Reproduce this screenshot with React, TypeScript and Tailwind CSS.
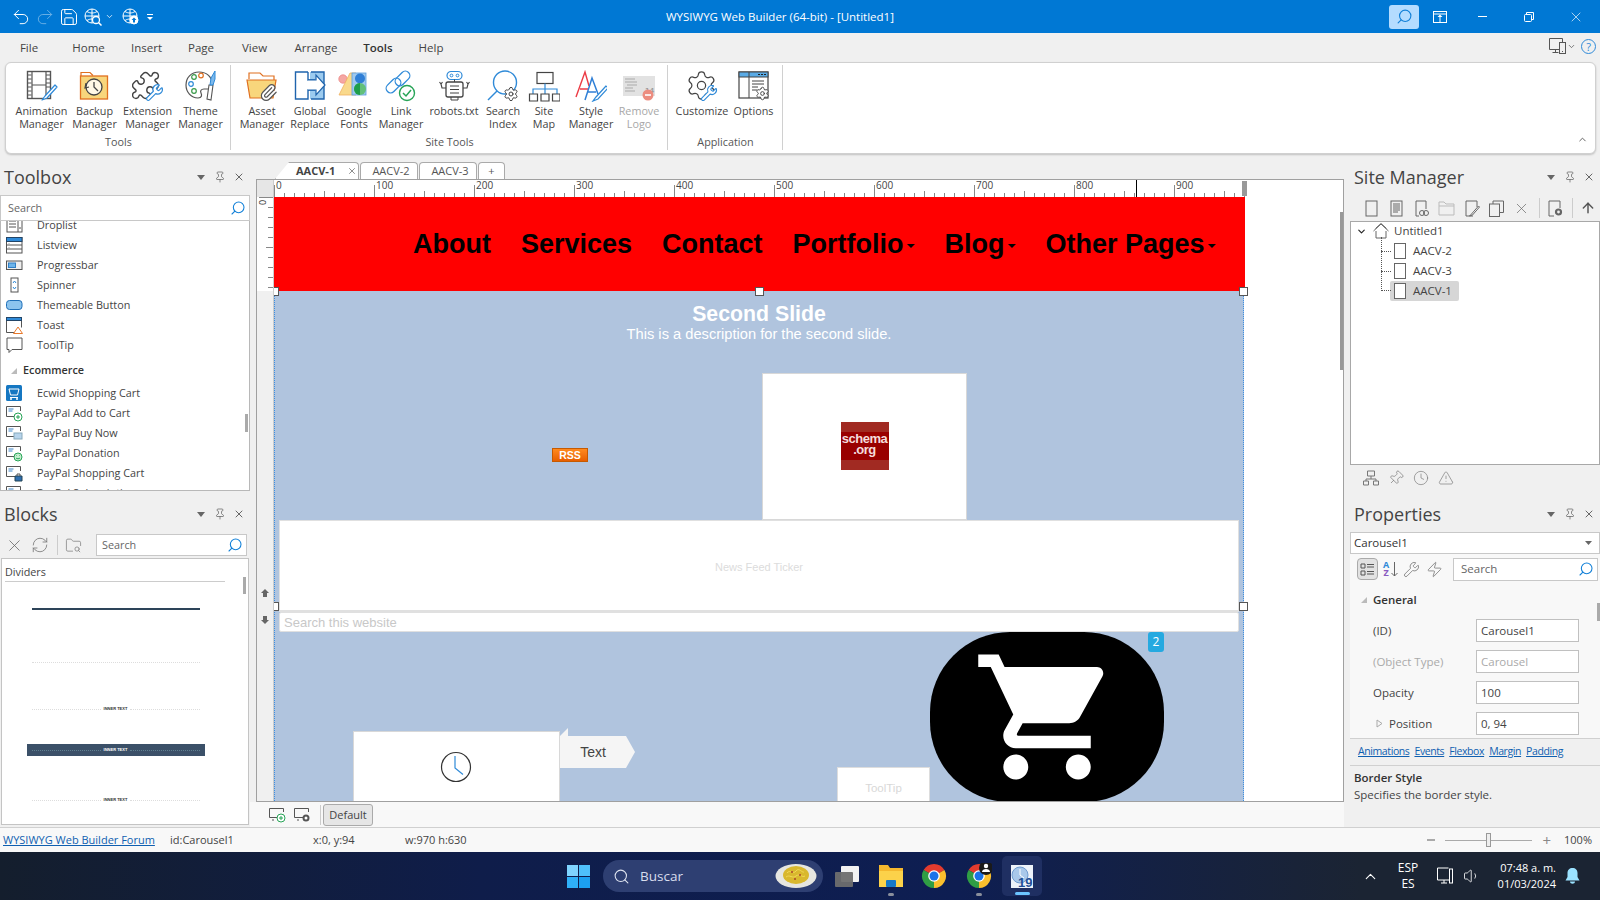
import type { ReactNode } from "react";
import {
  ArrowUp,
  ChevronDown,
  ChevronUp,
  Clock,
  FolderSearch,
  Paperclip,
  Pin,
  Puzzle,
  Redo2,
  RefreshCw,
  Save,
  Search,
  Settings,
  TriangleAlert,
  Undo2,
  Volume1,
  Wrench,
  X,
  Zap,
} from "lucide-react";

const uiFont = "font-['Open_Sans','Liberation_Sans',sans-serif]";
const webFont = "font-['Liberation_Sans',Arial,sans-serif]";

// ---- ribbon icons, all on a 32 box
const Icon = ({ children, size = 32 }: { children: ReactNode; size?: number }) => (
  <svg width={size} height={size} viewBox="0 0 32 32" fill="none">
    {children}
  </svg>
);

const Pencil = ({ d = "M29 15l-10 11-3 4 5-2 10-11z" }: { d?: string }) => (
  <path d={d} fill="#fff" stroke="#2f8ad8" strokeWidth="1.2" strokeLinejoin="round" />
);

const ribbonIcons: Record<string, ReactNode> = {
  animation: (
    <Icon>
      <rect x="1.5" y="1.5" width="23" height="27" fill="#fff" stroke="#555" strokeWidth="1.4" />
      <path d="M6 1.5v27M20 1.5v27M6 15h14" stroke="#555" strokeWidth="1.2" />
      <path d="M1.5 5h4M1.5 9h4M1.5 13h4M1.5 17h4M1.5 21h4M1.5 25h4M20 5h4.5M20 9h4.5M20 13h4.5M20 17h4.5" stroke="#555" />
      <Pencil />
    </Icon>
  ),
  backup: (
    <Icon>
      <path d="M2 7V2.5h9l3 3" stroke="#e07020" strokeWidth="1.2" />
      <rect x="1.5" y="6" width="27" height="23" fill="#f8d67c" stroke="#e07020" strokeWidth="1.3" />
      <circle cx="15" cy="17" r="8" fill="#fff8e6" stroke="#444" strokeWidth="1.3" />
      <path d="M15 12v5l4 4" stroke="#444" strokeWidth="1.3" />
      <path d="M7 13l-1 5 4-1" stroke="#444" strokeWidth="1.2" />
    </Icon>
  ),
  extension: (
    <Icon>
      <Puzzle x={-2} y={0} size={31} strokeWidth={1.1} color="#444" />
      <Wrench x={13} y={13} size={19} strokeWidth={1.5} color="#2f8ad8" fill="#fff" />
    </Icon>
  ),
  theme: (
    <Icon>
      <path d="M14 2C6 2 1 8 1 15s5 13 12 13c4 0 4-3 3-5s0-4 3-4h4c3 0 4-2 4-5C27 7 22 2 14 2z" fill="#fff" stroke="#555" strokeWidth="1.2" />
      <circle cx="9" cy="7" r="2.3" stroke="#3a9a4a" strokeWidth="1.2" />
      <circle cx="16" cy="5.5" r="2.3" stroke="#e07020" strokeWidth="1.2" />
      <circle cx="6" cy="14" r="2.3" stroke="#2f8ad8" strokeWidth="1.2" />
      <circle cx="9" cy="21" r="2.3" stroke="#3a9a4a" strokeWidth="1.2" />
      <path d="M26 30l2-15h-4l-2 14z" fill="#fff" stroke="#555" strokeWidth="1.1" />
      <path d="M25 15l1-7 4-7 0 8-2 6z" fill="#7db9ec" stroke="#2f8ad8" strokeWidth="1" />
    </Icon>
  ),
  asset: (
    <Icon>
      <path d="M3 9V3h11l3 3h11v4" fill="#fff" stroke="#e07020" strokeWidth="1.2" />
      <path d="M1 10h29l-3 18H4z" fill="#f8d67c" stroke="#e07020" strokeWidth="1.2" />
      <Paperclip x={13} y={13} size={19} strokeWidth={1.5} color="#555" fill="#fff" />
    </Icon>
  ),
  replace: (
    <Icon>
      <rect x="16" y="2" width="14" height="27" fill="#9ccbef" />
      <path d="M14 2H1.5v27H14v-9H21" stroke="#1f64ad" strokeWidth="1.4" />
      <path d="M14 2v8h7M17 2h13v27H17" stroke="#1f64ad" strokeWidth="1.4" />
      <path d="M14 10h8V5l9 10-9 10v-5h-8" fill="#fff" stroke="#1f64ad" strokeWidth="1.2" />
    </Icon>
  ),
  fonts: (
    <Icon>
      <circle cx="5" cy="9" r="4.2" fill="#f5a7a3" stroke="#e88" strokeWidth=".8" />
      <path d="M1 25L12 3l6 0v22z" fill="#f9d98c" stroke="#f0b060" strokeWidth=".8" />
      <rect x="14" y="3" width="14" height="22" fill="#9fc9ee" stroke="#5a9ddb" strokeWidth=".8" />
      <circle cx="22" cy="8.5" r="5" fill="#2f7fd6" />
      <circle cx="22" cy="19" r="6" fill="#62c07a" />
      <path d="M22 13a6 6 0 000 12z" fill="#1e9e4a" />
    </Icon>
  ),
  link: (
    <Icon>
      <rect x="0" y="11" width="17" height="9" rx="4.5" stroke="#2f8ad8" strokeWidth="1.3" transform="rotate(-45 8.500 15.500)" />
      <rect x="9" y="4" width="17" height="9" rx="4.5" stroke="#2f8ad8" strokeWidth="1.3" transform="rotate(-45 17.500 8.500)" />
      <circle cx="22" cy="23" r="7.5" fill="#fff" stroke="#27a457" strokeWidth="1.4" />
      <path d="M18 23l3 3 5-6" stroke="#27a457" strokeWidth="1.5" />
    </Icon>
  ),
  robots: (
    <Icon>
      <rect x="9" y="1.5" width="15" height="8" rx="4" stroke="#2f8ad8" strokeWidth="1.2" />
      <circle cx="13.5" cy="5.5" r="1.4" stroke="#2f8ad8" />
      <circle cx="19.5" cy="5.5" r="1.4" stroke="#2f8ad8" />
      <rect x="8" y="12" width="17" height="15" rx="2" fill="#fff" stroke="#444" strokeWidth="1.3" />
      <path d="M12 16h9M12 19.5h9M12 23h9M13 27v3h7v-3M16.5 9.5V12" stroke="#444" />
      <path d="M8 18H4l-1-4M25 18h4l1-4M1.5 12l1.5 2 1.5-2M28.5 12l1.5 2 1.5-2" stroke="#444" strokeWidth="1.1" />
    </Icon>
  ),
  index: (
    <Icon>
      <circle cx="18" cy="12.5" r="11.5" stroke="#2f8ad8" strokeWidth="1.4" />
      <path d="M10 21L1 30" stroke="#2f8ad8" strokeWidth="1.4" />
      <Settings x={16} y={16} size={16} strokeWidth={1.5} color="#444" fill="#fff" />
    </Icon>
  ),
  sitemap: (
    <Icon>
      <rect x="9" y="2.5" width="16" height="11" stroke="#444" strokeWidth="1.2" />
      <path d="M17 13.5V19M5 24v-5h24v5M17 19v5" stroke="#2f8ad8" strokeWidth="1.2" />
      <path d="M1.5 24h8v7h-8zM13 24h8v7h-8zM24.500 24h7.500v7h-7.500z" stroke="#444" strokeWidth="1.2" />
    </Icon>
  ),
  style: (
    <Icon>
      <path d="M1 27L10 2l4 14M5 19h9" stroke="#ec3b45" strokeWidth="1.4" />
      <path d="M10 30l7-22 6 16M13 22h8" stroke="#2f7fd6" strokeWidth="1.5" />
      <path d="M31 16L21 27l-3 4 5-2 10-11z" fill="#fff" stroke="#2f8ad8" strokeWidth="1.2" />
    </Icon>
  ),
  remove: (
    <Icon>
      <rect x="0" y="6" width="32" height="20" fill="#e2e2e2" />
      <path d="M2 9h10M2 12h12M4 15h10M2 18h8M2 21h10" stroke="#aaa" />
      <text x="22" y="23" fontSize="8" fill="#999" fontWeight="700" fontFamily="Liberation Sans">14</text>
      <circle cx="25" cy="25" r="5.500" fill="#ec8d80" />
      <path d="M22 25h6" stroke="#fff" strokeWidth="1.600" />
    </Icon>
  ),
  customize: (
    <Icon>
      <Settings x={-1} y={-1} size={33} strokeWidth={0.9} color="#444" />
      <Wrench x={14} y={14} size={18} strokeWidth={1.5} color="#2f8ad8" fill="#fff" />
    </Icon>
  ),
  options: (
    <Icon>
      <rect x="1" y="2" width="29" height="26" fill="#fff" stroke="#444" strokeWidth="1.2" />
      <rect x="1" y="2" width="29" height="5" fill="#5aabe6" stroke="#444" strokeWidth="1" />
      <path d="M20 4.500h2M23 4.500h2M26 4.500h2" stroke="#222" />
      <path d="M11 2v26M14 11h12M14 14h12M14 17h6M14 20h5" stroke="#444" />
      <Settings x={17} y={16} size={15} strokeWidth={1.5} color="#444" fill="#fff" />
    </Icon>
  ),
};

const ribbonGroups = [
  {
    name: "Tools",
    width: 225,
    pad: "pl-[9px]",
    items: [
      { icon: "animation", w: 53, lines: ["Animation", "Manager"] },
      { icon: "backup", w: 53, lines: ["Backup", "Manager"] },
      { icon: "extension", w: 53, lines: ["Extension", "Manager"] },
      { icon: "theme", w: 53, lines: ["Theme", "Manager"] },
    ],
  },
  {
    name: "Site Tools",
    width: 437,
    pad: "pl-[5px]",
    items: [
      { icon: "asset", w: 52, lines: ["Asset", "Manager"] },
      { icon: "replace", w: 44, lines: ["Global", "Replace"] },
      { icon: "fonts", w: 44, lines: ["Google", "Fonts"] },
      { icon: "link", w: 50, lines: ["Link", "Manager"] },
      { icon: "robots", w: 56, lines: ["robots.txt"] },
      { icon: "index", w: 42, lines: ["Search", "Index"] },
      { icon: "sitemap", w: 40, lines: ["Site", "Map"] },
      { icon: "style", w: 54, lines: ["Style", "Manager"] },
      { icon: "remove", w: 42, lines: ["Remove", "Logo"], disabled: true },
    ],
  },
  {
    name: "Application",
    width: 115,
    pad: "pl-[4px]",
    items: [
      { icon: "customize", w: 60, lines: ["Customize"] },
      { icon: "options", w: 43, lines: ["Options"] },
    ],
  },
];

const menuTabs = [
  { name: "File", w: 58 },
  { name: "Home", w: 61 },
  { name: "Insert", w: 55 },
  { name: "Page", w: 54 },
  { name: "View", w: 53 },
  { name: "Arrange", w: 70 },
  { name: "Tools", w: 54, active: true },
  { name: "Help", w: 52 },
];

const TitleBar = () => (
  <div className="relative flex h-[33px] items-center bg-[#0078d4] text-white">
    <div className="flex items-center pl-[11px]">
      <Undo2 size={20} strokeWidth={1.2} />
      <Redo2 size={20} strokeWidth={1.2} className="ml-[4px] opacity-40" />
      <Save size={20} strokeWidth={1.2} className="ml-[4px]" />
      <svg width="18" height="18" viewBox="0 0 18 18" fill="none" stroke="#fff" className="ml-[5px]">
        <circle cx="8" cy="8" r="7" />
        <path d="M1 8h14M8 1v14M3 3.500c3 2 7 2 10 0M3 12.500c3-2 7-2 10 0" />
        <circle cx="12" cy="12" r="3.500" fill="#0078d4" strokeWidth="1.300" />
        <path d="M14.500 14.500l3 3" strokeWidth="1.500" />
      </svg>
      <ChevronDown size={9} strokeWidth={2} className="ml-[3px]" />
      <svg width="18" height="18" viewBox="0 0 18 18" fill="none" stroke="#fff" className="ml-[8px]">
        <circle cx="8" cy="8" r="7" />
        <path d="M1 8h14M8 1v14M3 3.500c3 2 7 2 10 0M3 12.500c3-2 7-2 10 0" />
        <circle cx="12" cy="12" r="4" fill="#fff" />
        <path d="M12 9.500l-2.500 2.500h5zM11 12h2v2.500h-2z" fill="#0078d4" stroke="none" />
      </svg>
      <svg width="8" height="8" viewBox="0 0 8 8" fill="#fff" className="ml-[6px]">
        <path d="M1 1h6v1H1zM1 4h6L4 7z" />
      </svg>
    </div>
    <div className={`absolute left-[666px] top-[8px] text-[11.500px] leading-[17px] ${uiFont}`}>
      WYSIWYG Web Builder (64-bit) - [Untitled1]
    </div>
    <div className="ml-auto flex items-center">
      <div className="flex h-[24px] w-[30px] items-center justify-center rounded-[3px] bg-[#b4dcff]">
        <Search size={17} strokeWidth={1.6} color="#1280d8" className="-scale-x-100" />
      </div>
      <svg width="14" height="12" viewBox="0 0 14 12" fill="none" stroke="#fff" className="ml-[14px]">
        <rect x=".5" y=".5" width="13" height="11" />
        <path d="M.5 3h13" />
        <path d="M7 3.500L4.500 6h5zM6.500 6h1v5.500h-1z" fill="#fff" stroke="none" />
      </svg>
      <div className="ml-[31px] h-[1px] w-[9px] bg-white" />
      <svg width="10" height="10" viewBox="0 0 10 10" fill="none" stroke="#fff" className="ml-[37px]">
        <rect x=".5" y="2.500" width="7" height="7" rx="1" />
        <path d="M2.500 2.500V.5h7v7H7.500" />
      </svg>
      <X size={16} strokeWidth={1} className="ml-[34px] mr-[16px]" />
    </div>
  </div>
);

const MenuTabs = () => (
  <div className={`flex h-[29px] items-center bg-[#f0f0f0] pt-[1px] text-[11.500px] text-[#444] ${uiFont}`}>
    {menuTabs.map((t) => (
      <div
        key={t.name}
        style={{ width: t.w }}
        className={`relative text-center ${t.active ? "font-semibold text-[#333]" : ""}`}
      >
        {t.name}
        {t.active && <div className="absolute bottom-[-9px] left-[11px] h-[2px] w-[31px] bg-[#0a6abf]" />}
      </div>
    ))}
    <div className="ml-auto flex items-center pb-[4px] pr-[4px]">
      <svg width="17" height="16" viewBox="0 0 17 16" fill="none" stroke="#555">
        <path d="M10 11.500H.5v-11h13V4M3.500 14.500h6M6.500 11.500v3" />
        <rect x="10.500" y="4.500" width="6" height="11" fill="#f0f0f0" />
        <path d="M13 13.500h1" />
      </svg>
      <ChevronDown size={9} strokeWidth={2} color="#555" className="ml-[1px]" />
      <div className="ml-[5px] flex h-[15px] w-[15px] items-center justify-center rounded-full border border-[#2f8ad8] text-[11px] leading-none text-[#2f8ad8]">
        ?
      </div>
    </div>
  </div>
);

const Ribbon = () => (
  <div className="h-[92px] bg-[#f0f0f0] pl-[5px] pr-[4px]">
    <div className={`relative flex h-[92px] rounded-[6px] border border-[#d0d0d0] bg-white shadow-[0_1px_2px_rgba(0,0,0,0.2)] ${uiFont}`}>
      {ribbonGroups.map((g) => (
        <div key={g.name} style={{ width: g.width }} className="relative flex flex-col">
          <div className={`flex ${g.pad}`}>
            {g.items.map((it) => (
              <div key={it.icon} style={{ width: it.w }} className="flex flex-col items-center pt-[6px]">
                <div className="flex h-[33px] w-[32px] items-center justify-center">{ribbonIcons[it.icon]}</div>
                <div className={`pt-[2px] text-center text-[10.800px] leading-[13px] ${"disabled" in it ? "text-[#a8a8a8]" : "text-[#444]"}`}>
                  {it.lines.map((l) => (
                    <div key={l} className="whitespace-nowrap">{l}</div>
                  ))}
                </div>
              </div>
            ))}
          </div>
          <div className="absolute bottom-[5px] left-0 right-0 text-center text-[10.800px] leading-[13px] text-[#555]">{g.name}</div>
          <div className="absolute bottom-[3px] right-0 top-[2px] w-[1px] bg-[#d0d0d0]" />
        </div>
      ))}
      <ChevronUp size={11} strokeWidth={2} color="#555" className="absolute bottom-[8px] right-[7px]" />
    </div>
  </div>
);

const PanelHeader = ({ title }: { title: string }) => (
  <div className={`flex h-[41px] items-center pl-[4px] pt-[5px] ${uiFont}`}>
    <span className="text-[18px] leading-[26px] text-[#444]">{title}</span>
    <div className="ml-auto flex items-center gap-[7px] pr-[5px] text-[#666]">
      <svg width="12" height="12" viewBox="0 0 12 12" fill="#666"><path d="M2 4h8L6 9z" /></svg>
      <Pin size={12} strokeWidth={1.5} />
      <X size={12} strokeWidth={2} />
    </div>
  </div>
);

const BlueSearch = () => <Search size={16} strokeWidth={1.6} color="#1280d8" className="-scale-x-100" />;

// ---- toolbox row icons
const Mini = ({ children }: { children: ReactNode }) => (
  <svg width="17" height="17" viewBox="0 0 17 17" fill="none" stroke="#555">
    {children}
  </svg>
);

const PaypalMini = ({ children }: { children: ReactNode }) => (
  <Mini>
    <path d="M9 11.500H.5v-10h14V6" />
    <path d="M2.500 4h5M2.500 6h4" stroke="#3b83c8" strokeWidth="1.200" />
    {children}
  </Mini>
);

const toolboxRows: { name: string; icon: ReactNode }[] = [
  { name: "Droplist", icon: <Mini><rect x="1" y="1" width="15" height="14" /><path d="M3 4h7M3 7h7M3 10h7M12 1v14M13 11h2" /></Mini> },
  { name: "Listview", icon: <Mini><rect x=".5" y=".5" width="15.500" height="15.500" /><rect x=".5" y=".5" width="15.500" height="4" fill="#2f8ad8" stroke="#246" /><path d="M.5 8h15.500M.5 12h15.500M3 6.500v.5M3 10.500v.5" /></Mini> },
  { name: "Progressbar", icon: <Mini><rect x=".5" y="4" width="15.500" height="8.500" fill="#eee" /><rect x="2.500" y="6" width="7" height="4.500" fill="#6db4ea" stroke="#2f7fc6" /></Mini> },
  { name: "Spinner", icon: <Mini><rect x="5" y="1" width="7" height="14" /><path d="M7 6l1.500-2 1.500 2M7 10l1.500 2 1.500-2" stroke="#2f8ad8" /></Mini> },
  { name: "Themeable Button", icon: <Mini><rect x=".5" y="3.500" width="15.500" height="9" rx="3" fill="#8cc4ee" stroke="#1f6fb8" /></Mini> },
  { name: "Toast", icon: <Mini><path d="M10 15.500H.5V.5h15v10" /><rect x=".5" y=".5" width="15" height="3" fill="#2f8ad8" stroke="#246" /><path d="M12 10l4.500 6.500h-9z" fill="#fff" stroke="#e8782a" /></Mini> },
  { name: "ToolTip", icon: <Mini><path d="M1 1h15v11.500H6L3 15.500V12.500H1z" /></Mini> },
];

const ecommerceRows: { name: string; icon: ReactNode }[] = [
  {
    name: "Ecwid Shopping Cart",
    icon: <svg width="17" height="17" viewBox="0 0 17 17"><rect width="16" height="16" rx="1.500" fill="#1577c2" /><path d="M3 4h10l-1.500 6h-7zM4 12.500h8" stroke="#fff" fill="none" /><circle cx="5" cy="14" r="1" fill="#fff" /><circle cx="11" cy="14" r="1" fill="#fff" /></svg>,
  },
  { name: "PayPal Add to Cart", icon: <PaypalMini><circle cx="12" cy="12" r="4" fill="#fff" stroke="#27a457" /><path d="M10 12h4M12 10v4" stroke="#27a457" /></PaypalMini> },
  { name: "PayPal Buy Now", icon: <PaypalMini><rect x="8" y="8" width="8" height="6" fill="#b7d4ec" stroke="#8ab" /></PaypalMini> },
  { name: "PayPal Donation", icon: <PaypalMini><circle cx="12" cy="12" r="4" fill="#c4efcf" stroke="#27a457" /><path d="M10 13c1 1 3 1 4 0M10.500 10.500h.5M13 10.500h.5" stroke="#27a457" /></PaypalMini> },
  { name: "PayPal Shopping Cart", icon: <PaypalMini><path d="M9 11h7v5H9z" fill="#2f6fb0" stroke="#245" /><path d="M11 11V9h3v2" /></PaypalMini> },
  { name: "PayPal Subscription", icon: <PaypalMini><circle cx="12" cy="12" r="4" fill="#fff" /></PaypalMini> },
];

const ToolRow = ({ name, icon }: { name: string; icon: ReactNode }) => (
  <div className="flex h-[20px] items-center pl-[5px]">
    <span className="flex w-[31px] shrink-0 items-center">{icon}</span>
    <span className="whitespace-nowrap">{name}</span>
  </div>
);

const Toolbox = () => (
  <div className={`flex flex-col text-[10.800px] text-[#444] ${uiFont}`}>
    <PanelHeader title="Toolbox" />
    <div className="flex h-[26px] items-center justify-between border border-[#c8c8c8] bg-white pl-[7px] pr-[3px] text-[#666]">
      Search
      <BlueSearch />
    </div>
    <div className="relative h-[270px] overflow-hidden border-x border-b border-[#b8b8b8] bg-white">
      <div className="-mt-[6px]">
        {toolboxRows.map((r) => <ToolRow key={r.name} {...r} />)}
        <div className="flex h-[28px] items-center pl-[9px] pt-[3px] font-semibold text-[#333]">
          <svg width="8" height="8" viewBox="0 0 8 8" fill="#bbb"><path d="M7 1v6H1z" /></svg>
          <span className="ml-[5px]">Ecommerce</span>
        </div>
        {ecommerceRows.map((r) => <ToolRow key={r.name} {...r} />)}
      </div>
      <div className="absolute left-[244px] top-[193px] h-[18px] w-[3px] bg-[#aaa]" />
    </div>
  </div>
);

const Divider = ({ label, dark }: { label?: boolean; dark?: boolean }) => (
  <div className={`mx-auto flex h-[12px] w-[178px] items-center gap-[3px] px-[5px] ${dark ? "bg-[#3b5068]" : ""}`}>
    <div className={`h-0 flex-1 border-t border-dotted ${dark ? "border-[#5f7f8f]" : "border-[#ddd]"}`} />
    {label && <span className={`font-['Liberation_Sans'] text-[4px] font-bold leading-none ${dark ? "text-white" : "text-[#333]"}`}>INNER TEXT</span>}
    {label && <div className={`h-0 flex-1 border-t border-dotted ${dark ? "border-[#5f7f8f]" : "border-[#ddd]"}`} />}
  </div>
);

const Blocks = () => (
  <div className={`flex flex-col text-[10.800px] text-[#444] ${uiFont}`}>
    <PanelHeader title="Blocks" />
    <div className="flex h-[26px] items-center bg-[#f0f0f0] pl-[5px]">
      <X size={19} strokeWidth={1} color="#666" />
      <RefreshCw size={18} strokeWidth={1.100} color="#777" className="ml-[7px]" />
      <div className="ml-[8px] h-[20px] w-[1px] bg-[#ccc]" />
      <FolderSearch size={17} strokeWidth={1} color="#777" className="ml-[7px]" />
      <div className="ml-[14px] flex h-[22px] w-[151px] items-center justify-between border border-[#c8c8c8] bg-white pl-[5px] pr-[3px] text-[#666]">
        Search
        <BlueSearch />
      </div>
    </div>
    <div className="relative ml-[1px] h-[267px] w-[248px] overflow-hidden border border-[#c4c4c4] bg-white px-[3px] pt-[5px]">
      <div className="w-[220px] border-b border-[#ccc] pb-[1px] leading-[16px] text-[#444]">Dividers</div>
      <div className="-ml-[3px] pr-[16px]">
        <div className="mt-[26px] flex h-[2px] justify-center">
          <div className="h-[2px] w-[168px] bg-[#2d4459]" />
        </div>
        <div className="mt-[46px]"><Divider /></div>
        <div className="mt-[35px]"><Divider label /></div>
        <div className="mt-[29px]"><Divider label dark /></div>
        <div className="mt-[38px]"><Divider label /></div>
      </div>
      <div className="absolute left-[241px] top-[18px] h-[17px] w-[3px] bg-[#aaa]" />
    </div>
  </div>
);

const LeftColumn = () => (
  <div className="flex w-[250px] shrink-0 flex-col bg-[#f0f0f0]">
    <Toolbox />
    <Blocks />
  </div>
);

// ---- centre, document tabs and rulers
const docTabs = [
  { name: "AACV-2", w: 58, pad: "pl-[4px]" },
  { name: "AACV-3", w: 58, pad: "pl-[4px]" },
  { name: "+", w: 27, pad: "" },
];

const DocTabs = () => (
  <div className={`flex h-[25px] items-end pl-[19px] text-[11px] text-[#555] ${uiFont}`}>
    <div className="flex h-[17px] w-[84px] items-center rounded-tr-[4px] border-x border-t border-[#aaa] bg-white pl-[20px] font-bold text-[#444] [clip-path:polygon(14px_0,100%_0,100%_100%,0_100%)]">
      AACV-1
      <X size={10} strokeWidth={2} color="#777" className="ml-[12px]" />
    </div>
    {docTabs.map((t) => (
      <div key={t.name} style={{ width: t.w }} className={`ml-[1px] flex h-[17px] items-center justify-center rounded-t-[4px] border-x border-t border-[#aaa] bg-white ${t.pad}`}>
        {t.name}
      </div>
    ))}
  </div>
);

const HRuler = () => (
  <div className="flex h-[17px] shrink-0">
    <div className="w-[17px] shrink-0 border-r border-[#ccc] bg-[#e6e6e6]" />
    <svg width="1070" height="17" className="shrink-0 bg-white">
      {Array.from({ length: 98 }, (_, i) => {
        const h = i % 10 === 0 ? 12 : i % 5 === 0 ? 6 : 4;
        return <line key={i} x1={i * 10 + 0.5} x2={i * 10 + 0.5} y1={17 - h} y2={17} stroke="#888" />;
      })}
      {[0, 100, 200, 300, 400, 500, 600, 700, 800, 900].map((n) => (
        <text key={n} x={n + 2} y={9} fontSize="10" fill="#444" fontFamily="Open Sans">{n}</text>
      ))}
      <line x1="862.500" x2="862.500" y1="0" y2="17" stroke="#000" />
      <rect x="968" y="1" width="5" height="15" fill="#999" />
    </svg>
  </div>
);

const VRuler = () => (
  <div className="flex w-[17px] shrink-0 flex-col border-r border-[#ccc]">
    <svg width="16" height="94" className="shrink-0 bg-white">
      {Array.from({ length: 10 }, (_, i) => (
        <line key={i} x1={i === 0 ? 2 : i === 5 ? 9 : 11} x2="16" y1={i * 10 + 0.5} y2={i * 10 + 0.5} stroke="#888" />
      ))}
      <text x="0" y="0" fontSize="9" fill="#333" fontFamily="Open Sans" transform="translate(9 8) rotate(-90)">0</text>
    </svg>
    <div className="relative flex-1 bg-[#f0f0f0]">
      <svg width="10" height="9" viewBox="0 0 10 9" fill="#666" className="absolute left-[3px] top-[298px]"><path d="M5 0l4 4H7v4H3V4H1z" /></svg>
      <svg width="10" height="9" viewBox="0 0 10 9" fill="#666" className="absolute left-[3px] top-[325px]"><path d="M3 0h4v4h2L5 8 1 4h2z" /></svg>
    </div>
  </div>
);

const navItems = [
  { name: "About" },
  { name: "Services" },
  { name: "Contact" },
  { name: "Portfolio", caret: true },
  { name: "Blog", caret: true },
  { name: "Other Pages", caret: true },
];

const Handle = ({ className }: { className: string }) => (
  <div className={`absolute h-[9px] w-[9px] border border-[#555] bg-white ${className}`} />
);

const Carousel = () => (
  <div className={`relative h-[630px] w-[970px] bg-[#b0c4de] ${webFont}`}>
    <div className="absolute inset-y-0 left-0 w-0 border-l border-dotted border-[#3d8fe0]" />
    <div className="absolute inset-y-0 right-0 w-0 border-l border-dotted border-[#3d8fe0]" />
    <div className="pt-[10px] text-center text-white">
      <div className="text-[21.300px] font-bold leading-[26px]">Second Slide</div>
      <div className="text-[14.670px] leading-[14px]">This is a description for the second slide.</div>
    </div>

    <div className="absolute left-[278px] top-[157px] flex h-[14px] w-[36px] items-center justify-center border border-[#c65a00] bg-gradient-to-b from-[#ff8a1e] to-[#e85f00] text-[10.500px] font-bold leading-none text-white">
      RSS
    </div>

    <div className="absolute left-[488px] top-[82px] flex h-[147px] w-[205px] items-center justify-center border border-[#d8d8d8] bg-white pb-[2px]">
      <div className="flex h-[48px] w-[48px] flex-col justify-center bg-[linear-gradient(#a12a22_0,#a12a22_10px,#990000_10px,#990000_38px,#a12a22_38px)] pb-[4px] text-center text-[13px] font-bold leading-[11px] tracking-[-0.5px] text-[#f5dcdc]">
        <div>schema</div>
        <div>.org</div>
      </div>
    </div>

    <div className="absolute left-[5px] top-[229px] flex h-[92px] w-[960px] items-center justify-center border border-b-2 border-[#e0e0e0] bg-white pt-[3px] text-[11px] text-[#dcdcdc]">
      News Feed Ticker
    </div>
    <div className="absolute left-[5px] top-[321px] flex h-[20px] w-[960px] items-center rounded-[2px] border border-[#e0e0e0] bg-white pl-[4px] pt-[2px] text-[13px] text-[#c8c8c8]">
      Search this website
    </div>

    <div className="absolute left-[656px] top-[341px] flex h-[170px] w-[234px] items-center justify-center rounded-[80px] bg-black">
      <svg width="150" height="150" viewBox="0 0 24 24" fill="#fff">
        <path d="M7 18c-1.100 0-1.990.9-1.990 2S5.900 22 7 22s2-.9 2-2-.9-2-2-2zM1 2v2h2l3.600 7.590-1.350 2.450c-.16.28-.25.61-.25.96 0 1.100.9 2 2 2h12v-2H7.420c-.14 0-.25-.11-.25-.25l.03-.12.9-1.630h7.450c.75 0 1.410-.41 1.750-1.030l3.580-6.490c.08-.14.12-.31.12-.48 0-.55-.45-1-1-1H5.210l-.94-2H1zm16 16c-1.100 0-1.990.9-1.990 2s.89 2 1.990 2 2-.9 2-2-.9-2-2-2z" />
      </svg>
    </div>
    <div className={`absolute left-[874px] top-[341px] flex h-[20px] w-[16px] items-center justify-center rounded-[3px] bg-[#25a9e0] text-[12px] text-white ${uiFont}`}>
      2
    </div>

    <div className="absolute left-[79px] top-[440px] flex h-[120px] w-[207px] justify-center border border-[#d8d8d8] bg-white pt-[19px] pr-[2px]">
      <svg width="32" height="32" viewBox="0 0 32 32" fill="none">
        <circle cx="16" cy="16" r="14.500" stroke="#333" strokeWidth="1.200" />
        <path d="M15 5v12l8 6.500" stroke="#2f8ad8" strokeWidth="1.200" />
      </svg>
    </div>
    <div className="absolute left-[286px] top-[437px] flex h-[40px] w-[75px] flex-col">
      <div className="h-[8px] w-[8px] bg-[#f5f5f5] [clip-path:polygon(100%_0,100%_100%,0_100%)]" />
      <div className="flex h-[32px] flex-1 items-center justify-center bg-[#f5f5f5] pr-[9px] text-[14px] text-[#444] [clip-path:polygon(0_0,88%_0,100%_50%,88%_100%,0_100%)]">
        Text
      </div>
    </div>
    <div className="absolute left-[563px] top-[476px] flex h-[60px] w-[93px] justify-center border border-[#ddd] bg-white pt-[13px] text-[11.500px] leading-[14px] text-[#d8d8d8]">
      ToolTip
    </div>

    <Handle className="-left-[4px] -top-[4px]" />
    <Handle className="left-[481px] -top-[4px]" />
    <Handle className="-right-[4px] -top-[4px]" />
    <Handle className="-left-[4px] top-[311px]" />
    <Handle className="-right-[4px] top-[311px]" />
  </div>
);

const DesignCanvas = () => (
  <div className="relative min-w-0 flex-1 overflow-hidden bg-white">
    <div className={`flex h-[94px] w-[971px] items-center gap-[30px] bg-[#ff0000] pl-[139px] pt-[1px] text-[27px] font-bold leading-none text-black ${webFont}`}>
      {navItems.map((n) => (
        <span key={n.name} className="flex items-center whitespace-nowrap">
          {n.name}
          {n.caret && <span className="ml-[3px] mt-[2px] h-0 w-0 border-x-[4px] border-t-[4px] border-x-transparent border-t-black" />}
        </span>
      ))}
    </div>
    <Carousel />
    <div className="absolute right-[0px] top-[15px] h-[158px] w-[3px] bg-[#999]" />
  </div>
);

const CenterColumn = () => (
  <div className="flex w-[1094px] shrink-0 flex-col bg-[#f0f0f0] pl-[6px]">
    <DocTabs />
    <div className="flex h-[623px] flex-col overflow-hidden border border-[#a0a0a0]">
      <HRuler />
      <div className="flex min-h-0 flex-1">
        <VRuler />
        <DesignCanvas />
      </div>
    </div>
    <div className={`-ml-[6px] flex h-[25px] items-center bg-[#f8f8f8] pl-[19px] pt-[1px] text-[11px] text-[#444] ${uiFont}`}>
      <svg width="17" height="16" viewBox="0 0 17 16" fill="none" stroke="#555">
        <path d="M9 10.500H.5v-9h14V5M3 13h2" />
        <circle cx="12" cy="11" r="4" fill="#fff" stroke="#27a457" />
        <path d="M10 11h4M12 9v4" stroke="#27a457" />
      </svg>
      <svg width="17" height="16" viewBox="0 0 17 16" fill="none" stroke="#555" className="ml-[8px]">
        <path d="M9 10.500H.5v-9h14V5M3 13h2" />
        <circle cx="12" cy="11" r="2.500" fill="#fff" strokeWidth="2" />
      </svg>
      <div className="ml-[9px] h-[20px] w-[1px] bg-[#ccc]" />
      <div className="ml-[2px] flex h-[22px] w-[50px] items-center justify-center rounded-[3px] border border-[#aaa] bg-[#e6e6e6]">Default</div>
    </div>
  </div>
);

// ---- right column
const siteIcons: ReactNode[] = [
  <svg key="a" width="17" height="17" viewBox="0 0 17 17" fill="none" stroke="#666"><rect x="3" y="1" width="11" height="15" /></svg>,
  <svg key="b" width="17" height="17" viewBox="0 0 17 17" fill="none" stroke="#666"><rect x="3" y="1" width="11" height="15" /><path d="M5 4h7M5 6h7M5 8h7M5 10h7M5 12h5" /></svg>,
  <svg key="c" width="17" height="17" viewBox="0 0 17 17" fill="none" stroke="#666"><path d="M6 16H3V1h10v8" /><circle cx="9" cy="13" r="2.500" /><circle cx="13" cy="13" r="2.500" /></svg>,
  <svg key="d" width="17" height="17" viewBox="0 0 17 17" fill="none" stroke="#bbb"><path d="M1 15V2h5l2 2h8v11zM1 6h15" /></svg>,
  <svg key="e" width="17" height="17" viewBox="0 0 17 17" fill="none" stroke="#666"><path d="M10 16H3V1h11v6" /><path d="M15.500 6l-7 8-2 2 3-1 7-8z" fill="#fff" /></svg>,
  <svg key="f" width="17" height="17" viewBox="0 0 17 17" fill="none" stroke="#666"><rect x="1.500" y="4" width="10" height="12.500" /><path d="M5 4V1h10.500v11.500h-4" /></svg>,
  <X key="g" size={17} strokeWidth={1} color="#666" />,
];

const SiteManager = () => (
  <div className={`flex flex-col text-[11.500px] text-[#444] ${uiFont}`}>
    <PanelHeader title="Site Manager" />
    <div className="flex h-[26px] items-center bg-[#f0f0f0] pl-[13px]">
      <div className="flex gap-[8px]">{siteIcons}</div>
      <div className="ml-[9px] h-[20px] w-[1px] bg-[#ccc]" />
      <svg width="17" height="17" viewBox="0 0 17 17" fill="none" stroke="#666" className="ml-[7px]">
        <path d="M7 16H2V1h11v7" />
        <circle cx="11.500" cy="12" r="2.500" strokeWidth="2.200" />
      </svg>
      <div className="ml-[8px] h-[20px] w-[1px] bg-[#ccc]" />
      <ArrowUp size={16} strokeWidth={2.200} color="#555" className="ml-[7px]" />
    </div>
    <div className="relative h-[244px] border border-[#a8a8a8] bg-white">
      <div className="-mt-[1px] flex h-[20px] items-center pl-[5px]">
        <ChevronDown size={11} strokeWidth={2.500} color="#222" />
        <svg width="16" height="16" viewBox="0 0 16 16" fill="none" stroke="#666" className="ml-[6px]">
          <path d="M3 8v7h10V8M.5 8L8 1l7.500 7M2.500 5.500L8 .5l5.500 5" />
        </svg>
        <span className="ml-[5px]">Untitled1</span>
      </div>
      {["AACV-2", "AACV-3", "AACV-1"].map((p) => (
        <div key={p} className="flex h-[20px] items-center pl-[39px]">
          <div className={`flex h-[20px] w-[69px] items-center rounded-[2px] pl-[4px] ${p === "AACV-1" ? "bg-[#d6d6d6]" : ""}`}>
            <div className="h-[16px] w-[12px] border border-[#666] bg-white" />
            <span className="ml-[7px]">{p}</span>
          </div>
        </div>
      ))}
      <div className="absolute left-[30px] top-[15px] h-[54px] w-[10px] border-b border-l border-dotted border-[#555]" />
      <div className="absolute left-[30px] top-[29px] h-0 w-[10px] border-t border-dotted border-[#555]" />
      <div className="absolute left-[30px] top-[49px] h-0 w-[10px] border-t border-dotted border-[#555]" />
    </div>
    <div className="flex h-[26px] items-center gap-[9px] bg-[#f0f0f0] pl-[13px]">
      <svg width="16" height="16" viewBox="0 0 16 16" fill="none" stroke="#777">
        <path d="M4.500 1h7v5h-7zM8 6v3M3 11V9h10v2M.5 11h5v4h-5zM10.500 11h5v4h-5z" />
      </svg>
      <Pin size={16} strokeWidth={1} color="#777" className="rotate-45" />
      <Clock size={16} strokeWidth={1} color="#777" />
      <TriangleAlert size={16} strokeWidth={1} color="#777" />
    </div>
  </div>
);

const propRows = [
  { label: "(ID)", value: "Carousel1" },
  { label: "(Object Type)", value: "Carousel", muted: true },
  { label: "Opacity", value: "100" },
  { label: "Position", value: "0, 94", child: true },
];

const Properties = () => (
  <div className={`flex min-h-0 flex-1 flex-col text-[11.500px] text-[#444] ${uiFont}`}>
    <PanelHeader title="Properties" />
    <div className="flex h-[22px] items-center justify-between border border-[#c8c8c8] bg-white pl-[3px] pr-[7px] text-[#333]">
      Carousel1
      <svg width="7" height="5" viewBox="0 0 7 5" fill="#666"><path d="M0 0h7L3.500 4z" /></svg>
    </div>
    <div className="flex h-[36px] items-center bg-[#f8f8f8] pb-[6px] pl-[7px]">
      <div className="flex h-[22px] w-[21px] items-center justify-center rounded-[4px] border border-[#aaa] bg-[#e2e2e2]">
        <svg width="15" height="13" viewBox="0 0 15 13" fill="none" stroke="#555">
          <path d="M1 1h4v4H1zM1 8h4v4H1zM7 1.500h7M7 4h7M7 8.500h7M7 11h7" />
        </svg>
      </div>
      <div className="ml-[4px] flex w-[8px] flex-col items-center text-[9px] font-bold leading-[8px]">
        <span className="text-[#2f8ad8]">A</span>
        <span className="text-[#8a5ac0]">Z</span>
      </div>
      <svg width="7" height="15" viewBox="0 0 7 15" fill="none" stroke="#666" className="ml-[1px]">
        <path d="M3.500 0v14M.5 11l3 3 3-3" />
      </svg>
      <Wrench size={17} strokeWidth={1} color="#666" className="ml-[5px]" />
      <Zap size={17} strokeWidth={1} color="#666" className="ml-[6px]" />
      <div className="ml-[10px] flex h-[23px] w-[145px] items-center justify-between border border-[#c8c8c8] bg-white pl-[7px] pr-[3px] text-[#666]">
        Search
        <BlueSearch />
      </div>
    </div>
    <div className="relative h-[148px] overflow-hidden bg-[#f8f8f8]">
      <div className="flex h-[20px] items-center pl-[10px] font-semibold text-[#333]">
        <svg width="8" height="8" viewBox="0 0 8 8" fill="#bbb"><path d="M7 1v6H1z" /></svg>
        <span className="ml-[5px]">General</span>
      </div>
      <div className="mt-[9px] flex flex-col gap-[8px] pl-[23px]">
        {propRows.map((r) => (
          <div key={r.label} className={`flex h-[23px] shrink-0 items-center ${r.muted ? "text-[#aaa]" : ""}`}>
            <span className={`flex w-[103px] shrink-0 items-center ${r.child ? "pl-[3px]" : ""}`}>
              {r.child && <svg width="7" height="9" viewBox="0 0 7 9" fill="none" stroke="#aaa" className="mr-[6px]"><path d="M1 1l5 3.500-5 3.500z" /></svg>}
              {r.label}
            </span>
            <div className="flex h-[23px] w-[103px] items-center border border-[#c0c0c0] bg-white pl-[4px]">{r.value}</div>
          </div>
        ))}
      </div>
      <div className="absolute right-0 top-[13px] h-[18px] w-[3px] bg-[#aaa]" />
    </div>
    <div className="flex h-[28px] items-center gap-[5px] border-y border-[#d0d0d0] bg-[#f0f0f0] pl-[8px] text-[10.500px] tracking-[-0.4px] text-[#0f5fb0] underline">
      <span>Animations</span>
      <span>Events</span>
      <span>Flexbox</span>
      <span>Margin</span>
      <span>Padding</span>
    </div>
    <div className="flex-1 bg-[#f0f0f0] pl-[4px] pt-[3px] leading-[17px]">
      <div className="font-semibold text-[#333]">Border Style</div>
      <div>Specifies the border style.</div>
    </div>
  </div>
);

const RightColumn = () => (
  <div className="flex w-[250px] shrink-0 flex-col bg-[#f0f0f0]">
    <SiteManager />
    <Properties />
  </div>
);

const StatusBar = () => (
  <div className={`flex h-[25px] items-center border-t border-[#d0d0d0] bg-[#f8f8f8] pl-[3px] text-[11px] text-[#444] ${uiFont}`}>
    <span className="w-[167px] text-[#0f5fb0] underline">WYSIWYG Web Builder Forum</span>
    <span className="w-[143px]">id:Carousel1</span>
    <span className="w-[92px]">x:0, y:94</span>
    <span>w:970 h:630</span>
    <div className="ml-auto flex items-center pr-[8px]">
      <div className="h-[2px] w-[8px] bg-[#aaa]" />
      <div className="relative ml-[10px] h-[1px] w-[87px] bg-[#aaa]">
        <div className="absolute left-[41px] top-[-7px] h-[14px] w-[5px] border border-[#999] bg-[#eee]" />
      </div>
      <span className="ml-[10px] text-[15px] leading-none text-[#888]">+</span>
      <span className="ml-[13px]">100%</span>
    </div>
  </div>
);

const ChromeIcon = ({ badge }: { badge?: boolean }) => (
  <svg width="26" height="26" viewBox="-1 -1 26 26">
    <path d="M12 12L1.600 6A12 12 0 0 1 22.400 6Z" fill="#e33b2e" />
    <path d="M12 12L22.400 6A12 12 0 0 1 12 24Z" fill="#fbc02d" />
    <path d="M12 12L12 24A12 12 0 0 1 1.600 6Z" fill="#2f9e44" />
    <circle cx="12" cy="12" r="5.800" fill="#fff" />
    <circle cx="12" cy="12" r="4.500" fill="#1a73e8" />
    {badge && (
      <g>
        <circle cx="19" cy="4" r="7" fill="#1a1a1a" />
        <circle cx="19" cy="2" r="2.200" fill="#fff" />
        <path d="M15 8c0-2 2-3 4-3s4 1 4 3z" fill="#fff" />
      </g>
    )}
  </svg>
);

const Taskbar = () => (
  <div className={`flex h-[48px] items-center bg-[linear-gradient(90deg,#141e2d_0%,#0f1d4a_30%,#0e1e52_60%,#1b2433_85%)] text-white ${uiFont}`}>
    <div className="ml-[567px] grid h-[23px] w-[23px] grid-cols-2 gap-[1px]">
      <div className="bg-[#7fd4ff]" />
      <div className="bg-[#4fc0fb]" />
      <div className="bg-[#2fb0f8]" />
      <div className="bg-[#1c9ff0]" />
    </div>
    <div className="ml-[13px] flex h-[32px] w-[220px] items-center rounded-full bg-[#2e3f72] pl-[10px]">
      <Search size={17} strokeWidth={1.500} color="#dfe4f0" />
      <span className="ml-[10px] text-[13.500px] text-[#d8dded]">Buscar</span>
      <svg width="42" height="26" viewBox="0 0 42 26" className="ml-auto mr-[6px]">
        <ellipse cx="21" cy="13" rx="20.500" ry="12" fill="#e6e6e0" />
        <ellipse cx="21" cy="12" rx="13" ry="9" fill="#d9b82e" />
        <path d="M12 10c3-4 6 2 9-2s6 2 8 1M11 14c4-3 6 2 10-1s6 2 9 0" stroke="#f2d857" fill="none" />
        <circle cx="17" cy="9" r="1" fill="#a8452a" />
        <circle cx="25" cy="12" r="1" fill="#a8452a" />
        <circle cx="20" cy="16" r="1" fill="#a8452a" />
      </svg>
    </div>
    <svg width="24" height="21" viewBox="0 0 24 21" className="ml-[12px]">
      <rect x="6" y="0" width="18" height="16" rx="1" fill="#f2f2f2" />
      <rect x="0" y="6" width="18" height="15" rx="1" fill="#6e6e6e" fillOpacity=".95" />
    </svg>
    <div className="relative ml-[20px] h-[24px] w-[24px]">
      <svg width="24" height="24" viewBox="0 0 24 24">
        <path d="M0 1h9l2 3h13v19H0z" fill="#f5b82e" />
        <path d="M0 7h24v16H0z" fill="#fcd24a" />
        <rect x="7" y="16" width="10" height="7" rx="1" fill="#1578c8" />
      </svg>
      <div className="absolute left-[9px] top-[29px] h-[3px] w-[6px] rounded-full bg-[#8a8f9c]" />
    </div>
    <div className="ml-[18px] flex h-[26px] w-[26px]"><ChromeIcon /></div>
    <div className="relative ml-[19px] h-[26px] w-[26px]">
      <ChromeIcon badge />
      <div className="absolute left-[10px] top-[30px] h-[3px] w-[6px] rounded-full bg-[#8a8f9c]" />
    </div>
    <div className="relative ml-[10px] flex h-[40px] w-[40px] items-center justify-center rounded-[5px] bg-[#1f2f62]">
      <svg width="22" height="23" viewBox="0 0 22 23">
        <rect width="22" height="23" fill="#eef3fa" />
        <circle cx="9" cy="10" r="8" fill="#a9c8ea" stroke="#6f9bd0" />
        <path d="M9 4v6l4 3" stroke="#fff" fill="none" />
        <text x="7" y="22" fontSize="13" fontWeight="700" fill="#1f4f96" fontFamily="Liberation Sans">19</text>
      </svg>
      <div className="absolute bottom-[1px] left-[13px] h-[3px] w-[15px] rounded-full bg-[#6cc5ff]" />
    </div>
    <div className="ml-auto flex items-center">
      <ChevronUp size={17} strokeWidth={1.500} />
      <div className="ml-[13px] w-[32px] text-center text-[12px] leading-[16px]">
        <div>ESP</div>
        <div>ES</div>
      </div>
      <svg width="18" height="18" viewBox="0 0 18 18" fill="none" stroke="#fff" className="ml-[13px]">
        <path d="M12 13H.5V1h11M4 16h6M7 13v3" />
        <rect x="12.500" y="2" width="3" height="14" />
      </svg>
      <Volume1 size={18} strokeWidth={1.100} className="ml-[8px]" />
      <div className="ml-[3px] w-[72px] whitespace-nowrap text-right text-[11px] leading-[16px]">
        <div>07:48 a. m.</div>
        <div>01/03/2024</div>
      </div>
      <svg width="15" height="16" viewBox="0 0 15 16" fill="#9be2ff" className="ml-[9px] mr-[20px]">
        <path d="M7.500 0c3 0 5 2 5 5v4l2 3.500H.5l2-3.500V5c0-3 2-5 5-5zM5 13.500h5c0 3-5 3-5 0z" />
      </svg>
    </div>
  </div>
);

export default function App() {
  return (
    <div className="flex h-[900px] w-[1600px] flex-col overflow-hidden bg-[#f0f0f0]">
      <TitleBar />
      <MenuTabs />
      <Ribbon />
      <div className="flex h-[673px] min-h-0">
        <LeftColumn />
        <CenterColumn />
        <div className="w-[6px] shrink-0 bg-[#f0f0f0]" />
        <RightColumn />
      </div>
      <StatusBar />
      <Taskbar />
    </div>
  );
}
